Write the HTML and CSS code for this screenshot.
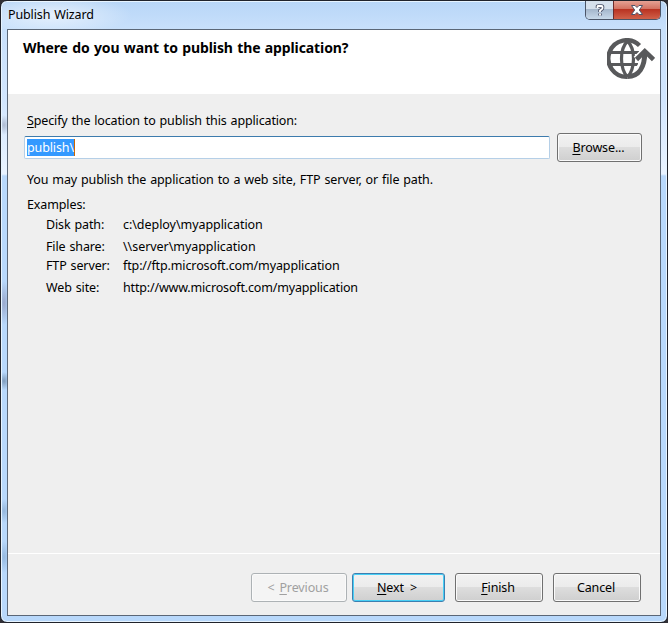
FILE: index.html
```html
<!DOCTYPE html>
<html lang="en">
<head>
<meta charset="utf-8">
<title>Publish Wizard</title>
<link rel="stylesheet" href="styles.css">
</head>
<body>
<div class="window">
  <header class="titlebar">
    <span class="title">Publish Wizard</span>
    <div class="controls">
      <span class="help"><svg width="14" height="14" viewBox="0 0 14 14"><path class="edge" d="M4.500 5V3.500Q4.500 3 5.500 3h3Q9.500 3 9.500 4v1Q9.500 6 8.500 6.500L7 7.500V9M7 10.500v2"/><path class="mark" d="M4.500 5V3.500Q4.500 3 5.500 3h3Q9.500 3 9.500 4v1Q9.500 6 8.500 6.500L7 7.500V9M7 10.500v2"/></svg></span>
      <span class="close"><svg width="14" height="12" viewBox="0 0 14 12"><path class="edge" d="M1.500 1.500h3.500L7 3.500l2-2h3.500L9.300 6l3.200 4.500H9L7 8.500l-2 2H1.500L4.700 6z"/></svg></span>
    </div>
  </header>
  <main class="client">
    <section class="banner">
      <h1>Where do you want to publish the application?</h1>
      <svg class="globe" width="48" height="42" viewBox="0 0 48 42">
        <g fill="none" stroke="#58595b">
          <path stroke-width="4.400" d="M32.500 7.500A18.300 18.300 0 1 0 20.500 38.800"/>
          <path stroke-width="3.200" d="M4 14.500h28M4 26.500h27M20.500 3C12.500 11 12.500 30 20.500 39M20.500 3C28.500 11 28.500 30 20.500 39"/>
          <path stroke="#fff" stroke-width="8" d="M31 33C35 29 37 25 37.500 16"/>
          <path stroke="#fff" stroke-width="6.500" d="M29 21L37.500 12.500l9 9"/>
          <path stroke-width="5" d="M20.500 38.500C32 38.500 37.800 29 37.800 14"/>
          <path stroke-width="4.600" d="M29.500 21.500L37.800 13.200L46.500 21.500"/>
        </g>
      </svg>
    </section>
    <section class="content">
      <label class="prompt"><u>S</u>pecify the location to publish this application:</label>
      <div class="location">
        <div class="field"><span class="selection">publish\</span></div>
        <button class="browse"><u>B</u>rowse...</button>
      </div>
      <p class="hint">You may publish the application to a web site, FTP server, or file path.</p>
      <p class="heading">Examples:</p>
      <dl class="examples">
        <dt>Disk path:</dt><dd class="path">c:\deploy\myapplication</dd>
        <dt>File share:</dt><dd class="path">\\server\myapplication</dd>
        <dt>FTP server:</dt><dd>ftp://ftp.microsoft.com/myapplication</dd>
        <dt>Web site:</dt><dd class="url">http://www.microsoft.com/myapplication</dd>
      </dl>
    </section>
    <footer class="actions">
      <button class="previous" disabled>&lt; <u>P</u>revious</button>
      <button class="next"><u>N</u>ext &gt;</button>
      <button class="finish"><u>F</u>inish</button>
      <button class="cancel">Cancel</button>
    </footer>
  </main>
</div>
</body>
</html>
```
FILE: styles.css
```css
* { box-sizing: border-box; }
body {
  margin: 0;
  background: #302f35;
  color: #000;
  font: 12.5px/18px "Noto Sans", sans-serif;
  letter-spacing: -0.12px;
  word-spacing: 0.8px;
}
.window {
  width: 668px;
  height: 623px;
  padding: 0 6px 6px;
  border: 1px solid #20232b;
  border-radius: 7px;
  box-shadow: inset 0 0 0 1px #e7f4ff;
  background:
    radial-gradient(ellipse 6px 10px at 3px 124px, #aebbd2, transparent) no-repeat,
    radial-gradient(ellipse 6px 22px at 3px 302px, #9aa9cc, transparent) no-repeat,
    radial-gradient(ellipse 6px 9px at 3px 380px, #7f9cbc, transparent) no-repeat,
    radial-gradient(ellipse 6px 12px at 3px 510px, #95b7dc, transparent) no-repeat,
    radial-gradient(ellipse 6px 16px at 3px 556px, #95b9e0, transparent) no-repeat,
    linear-gradient(#b8d6f7 0, #c8e0fb 28px, #d2e6fe 100px, #e9f3ff 173px, #b8d8fb 175px);
}
.titlebar {
  display: flex;
  justify-content: space-between;
  height: 28px;
  margin: 0 -5px;
  padding: 0 5px;
  background: radial-gradient(ellipse 80px 20px at 50px 14px, rgba(255, 255, 255, .6), transparent);
}
.title { margin-top: 5px; padding-left: 1px; }
.controls {
  display: flex;
  width: 76px;
  height: 19px;
  border: 1px solid #4b5567;
  border-top: 0;
  border-radius: 0 0 5px 5px;
  overflow: hidden;
}
.help, .close { display: flex; align-items: center; justify-content: center; }
.help { width: 27px; background: linear-gradient(#d5e0ec 0 45%, #a4b6cb 46%, #c8d9ea); }
.close { flex: 1; border-left: 1px solid #6d2c2c; background: linear-gradient(#e5a194, #d27060 45%, #b93322 47%, #d0614a); }
.controls svg { fill: none; }
.edge { stroke: #4d5369; stroke-width: 3.6; }
.close .edge { fill: #fff; stroke-width: 1; }
.mark { stroke: #fff; stroke-width: 1.8; }
.client {
  display: flex;
  flex-direction: column;
  width: 654px;
  height: 587px;
  border: 1px solid #5b6777;
  background: #efefef;
}
.banner { display: flex; flex-shrink: 0; justify-content: space-between; height: 64px; padding: 8px 5px 0 15px; background: #fff; }
h1 { margin: 0; font-size: 14px; line-height: 20px; letter-spacing: -0.1px; }
.content { height: 459px; padding: 18px 18px 0 16px; }
.prompt { display: block; padding-left: 3px; letter-spacing: -0.14px; }
.location { display: flex; justify-content: space-between; height: 29px; margin-top: 3px; align-items: center; }
.field {
  width: 526px;
  height: 23px;
  padding: 2px;
  border: 1px solid #b5cfe7;
  border-top-color: #3d7bad;
  border-radius: 2px;
  background: #fff;
}
.selection { display: inline-block; height: 17px; line-height: 17px; border-right: 1px solid #cc6600; background: #3399ff; color: #fff; }
button {
  height: 29px;
  padding: 0 2px 0 0;
  border: 1px solid #707070;
  border-radius: 3px;
  box-shadow: inset 0 0 0 1px #fafafa;
  background: linear-gradient(#f2f2f2 0, #ebebeb 48%, #dddddd 50%, #cfcfcf);
  color: #000;
  font: inherit;
  letter-spacing: inherit;
  word-spacing: 1.8px;
}
u { text-decoration-thickness: 1px; text-underline-offset: 2px; }
.browse { width: 85px; }
p { margin: 0; padding-left: 3px; }
.hint { margin-top: 9px; }
.heading { margin-top: 7px; }
.examples { display: grid; grid-template: 22px 19px 22px 18px / 77px 1fr; margin: 2px 0 0 22px; }
dd { margin: 0; }
.path { letter-spacing: -0.05px; }
.url { letter-spacing: -0.17px; }
.actions { display: flex; height: 62px; padding: 19px 0 0 243px; border-top: 1px solid #fff; }
.previous { width: 96px; margin-right: 5px; border-color: #adb2b5; background: #f4f4f4; color: #a0a0a0; }
.next { width: 93px; margin-right: 10px; padding-right: 0; border-color: #3c7fb1; box-shadow: inset 0 0 0 1px #48cff5; word-spacing: 3px; padding-right: 3px; }
.finish { width: 88px; margin-right: 10px; }
.cancel { width: 88px; }
```
